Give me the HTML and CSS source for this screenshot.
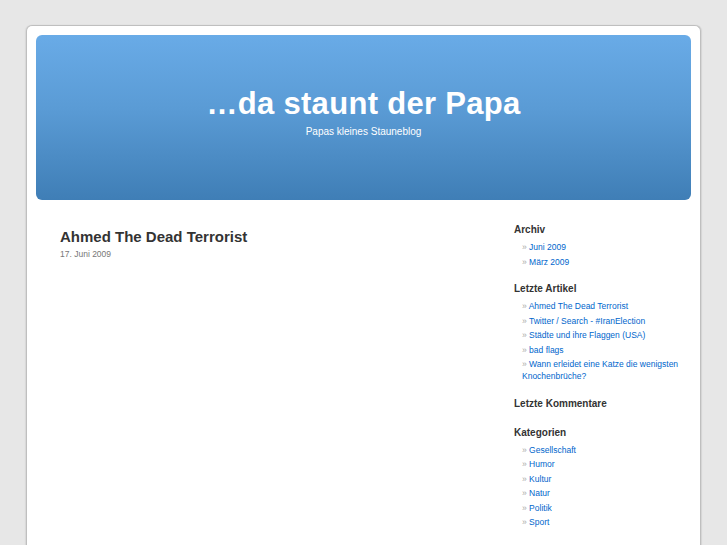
FILE: index.html
```html
<!DOCTYPE html>
<html lang="de">
<head>
<meta charset="utf-8">
<title>…da staunt der Papa</title>
<link rel="stylesheet" href="styles.css">
</head>
<body>
<div class="page">
  <header class="header">
    <h1 class="site-title">…da staunt der Papa</h1>
    <p class="site-desc">Papas kleines Stauneblog</p>
  </header>
  <div class="body">
    <main class="content">
      <article class="post">
        <h2 class="post-title">Ahmed The Dead Terrorist</h2>
        <p class="post-date">17. Juni 2009</p>
      </article>
    </main>
    <aside class="sidebar">
      <section class="widget">
        <h3 class="widget-title">Archiv</h3>
        <ul class="widget-list">
          <li>» <a href="#">Juni 2009</a></li>
          <li>» <a href="#">März 2009</a></li>
        </ul>
      </section>
      <section class="widget">
        <h3 class="widget-title">Letzte Artikel</h3>
        <ul class="widget-list">
          <li>» <a href="#">Ahmed The Dead Terrorist</a></li>
          <li>» <a href="#">Twitter / Search - #IranElection</a></li>
          <li>» <a href="#">Städte und ihre Flaggen (USA)</a></li>
          <li>» <a href="#">bad flags</a></li>
          <li>» <a href="#">Wann erleidet eine Katze die wenigsten Knochenbrüche?</a></li>
        </ul>
      </section>
      <section class="widget widget-empty">
        <h3 class="widget-title">Letzte Kommentare</h3>
      </section>
      <section class="widget">
        <h3 class="widget-title">Kategorien</h3>
        <ul class="widget-list">
          <li>» <a href="#">Gesellschaft</a></li>
          <li>» <a href="#">Humor</a></li>
          <li>» <a href="#">Kultur</a></li>
          <li>» <a href="#">Natur</a></li>
          <li>» <a href="#">Politik</a></li>
          <li>» <a href="#">Sport</a></li>
        </ul>
      </section>
    </aside>
  </div>
</div>
</body>
</html>
```

FILE: styles.css
```css
html, body {
  margin: 0;
  padding: 0;
}
body {
  background: #e7e7e7;
  font-family: "Liberation Sans", Arial, sans-serif;
  color: #333;
  padding-top: 25px;
}
.page {
  box-sizing: border-box;
  width: 675px;
  margin: 0 auto;
  background: #fff;
  border: 1px solid #bfbfbf;
  border-bottom: none;
  border-radius: 6px 6px 0 0;
  box-shadow: 1px 0 1px #d4d4d4, -1px 0 1px #d8d8d8;
  padding: 9px 9px 0;
  min-height: 560px;
}
.header {
  height: 165px;
  box-sizing: border-box;
  border-radius: 6px;
  background: linear-gradient(to bottom, #69abe7 0%, #5a9bd5 45%, #3f7eb6 100%);
  padding-top: 51px;
  text-align: center;
  color: #fff;
}
.site-title {
  margin: 0;
  font-size: 31px;
  line-height: 36px;
  font-weight: bold;
  letter-spacing: 0.3px;
}
.site-desc {
  margin: 4px 0 0;
  font-size: 10px;
  line-height: 12px;
}
.body {
  display: flex;
}
.content {
  box-sizing: border-box;
  width: 478px;
  padding: 28px 0 0 24px;
}
.post-title {
  margin: 0 0 2px;
  font-size: 15px;
  line-height: 18px;
  font-weight: bold;
  color: #333;
}
.post-date {
  margin: 0;
  font-size: 8.5px;
  line-height: 12px;
  color: #777;
}
.sidebar {
  width: 165px;
  padding: 23px 0 0 0;
}
.widget {
  margin-bottom: 12px;
}
.widget-empty {
  margin-bottom: 15px;
}
.widget-title {
  margin: 0 0 4px;
  font-size: 10px;
  line-height: 14px;
  font-weight: bold;
  color: #333;
}
.widget-list {
  list-style: none;
  margin: 0;
  padding: 0 0 0 8px;
}
.widget-list li {
  font-size: 8.5px;
  line-height: 12px;
  padding-bottom: 2.5px;
  color: #aaa;
}
.widget-list a {
  color: #06c;
  text-decoration: none;
}
```
